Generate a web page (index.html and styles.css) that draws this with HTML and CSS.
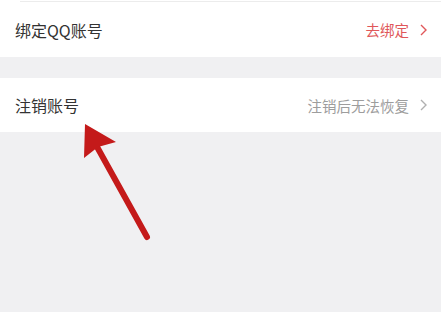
FILE: index.html
```html
<!DOCTYPE html>
<html lang="zh">
<head>
<meta charset="utf-8">
<link rel="stylesheet" href="styles.css">
</head>
<body>
<div class="page">
  <div class="group">
    <div class="top-edge"></div>
    <div class="divider"></div>
    <div class="row row-first">
      <span class="title">绑定QQ账号</span>
      <span class="extra extra-red">去绑定
        <svg class="chev" width="7" height="12" viewBox="0 0 7 12"><polyline points="1,1 6,6 1,11" fill="none" stroke="currentColor" stroke-width="1.4"/></svg>
      </span>
    </div>
  </div>
  <div class="gap"></div>
  <div class="group">
    <div class="row">
      <span class="title">注销账号</span>
      <span class="extra extra-gray">注销后无法恢复
        <svg class="chev" width="7" height="12" viewBox="0 0 7 12"><polyline points="1,1 6,6 1,11" fill="none" stroke="currentColor" stroke-width="1.4"/></svg>
      </span>
    </div>
  </div>
  <svg class="arrow" width="441" height="312" viewBox="0 0 441 312">
    <line x1="147" y1="237" x2="96" y2="145" stroke="#c41a1a" stroke-width="6" stroke-linecap="round"/>
    <polygon points="85,124 84,158 98,147 116,142" fill="#c41a1a"/>
  </svg>
</div>
</body>
</html>
```
FILE: styles.css
```css
html, body {
  margin: 0;
  padding: 0;
  background: #f0f0f2;
}
.page {
  position: relative;
  width: 441px;
  height: 312px;
  overflow: hidden;
  font-family: "Noto Sans CJK SC", "Noto Sans", sans-serif;
}
.group {
  background: #ffffff;
}
.top-edge {
  height: 1px;
}
.divider {
  height: 1px;
  margin-left: 20px;
  background: #ececec;
}
.row {
  height: 54px;
  display: flex;
  align-items: center;
  justify-content: space-between;
  padding: 0 14px 0 15px;
}
.row-first {
  height: 55px;
}
.title {
  font-size: 16px;
  color: #333333;
}
.extra {
  display: flex;
  align-items: center;
  gap: 11px;
  font-size: 14.5px;
}
.extra-red {
  color: #e0575a;
}
.extra-gray {
  color: #9d9d9d;
}
.extra-gray .chev {
  color: #b0b0b0;
}
.gap {
  height: 21px;
}
.arrow {
  position: absolute;
  left: 0;
  top: 0;
}
```
